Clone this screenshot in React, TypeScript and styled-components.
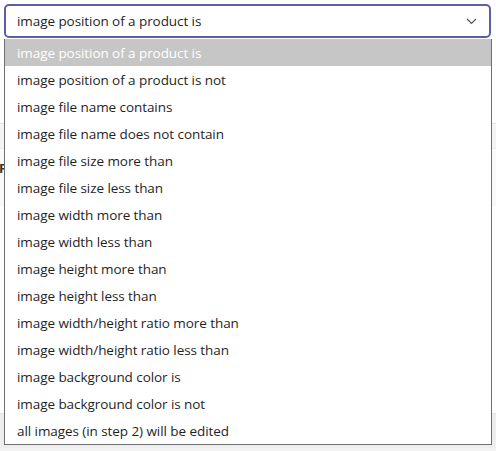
import React from "react";
import styled, { createGlobalStyle } from "styled-components";

const GlobalStyle = createGlobalStyle`
  html, body {
    margin: 0;
    padding: 0;
    background: #ffffff;
  }
  body {
    font-family: "Open Sans", "Noto Sans", sans-serif;
    color: #1f1f1f;
  }
`;

const Page = styled.div`
  position: relative;
  width: 496px;
  height: 451px;
  overflow: hidden;
  background: #ffffff;
  display: flex;
  flex-direction: column;
`;

const SelectBox = styled.div`
  margin: 4px 5px 0 4px;
  height: 34px;
  box-sizing: border-box;
  border: 2px solid #5b5fa7;
  border-radius: 5px;
  display: flex;
  align-items: center;
  justify-content: space-between;
  padding: 0 12px 0 11px;
  font-size: 13.5px;
  letter-spacing: -0.07px;
  color: #1f1f1f;
  background: #ffffff;
`;

const Chevron = styled.svg`
  width: 11px;
  height: 7px;
  flex: none;
`;

/* content of the form that sits underneath the open list */
const FormArea = styled.div`
  flex: 1;
  display: flex;
  flex-direction: column;
`;

const Spacer = styled.div<{ $h: number }>`
  height: ${(p) => p.$h}px;
  flex: none;
`;

const HeaderBand = styled.div`
  height: 24px;
  flex: none;
  background: #f4f4f4;
  border-top: 1px solid #e2e2e2;
  border-bottom: 1px solid #ebebeb;
`;

const SoftRow = styled.div`
  height: 58px;
  flex: none;
  background: #fafafa;
  display: flex;
  align-items: flex-start;
  padding-top: 10px;
  box-sizing: border-box;
`;

const FieldLabel = styled.span`
  font-family: "Open Sans", sans-serif;
  font-weight: 700;
  font-size: 13px;
  color: #333;
  margin-left: -1px;
`;

const FooterBand = styled.div`
  height: 34px;
  flex: none;
  background: #eeeeee;
  border-top: 1px solid #e4e4e4;
`;

const PageBottom = styled.div`
  flex: 1;
  background: #f3f3f3;
`;

const OptionList = styled.ul`
  position: absolute;
  left: 4px;
  top: 39px;
  width: 488px;
  box-sizing: border-box;
  margin: 0;
  padding: 0;
  list-style: none;
  background: #ffffff;
  border: 1px solid #6f6f6f;
  border-top: none;
`;

const OptionItem = styled.li<{ $active?: boolean }>`
  height: 27px;
  display: flex;
  align-items: center;
  padding-left: 12px;
  font-size: 13.5px;
  letter-spacing: -0.07px;
  color: ${(p) => (p.$active ? "#ffffff" : "#1f1f1f")};
  background: ${(p) => (p.$active ? "#c6c6c6" : "transparent")};
  white-space: nowrap;
`;

const options = [
  "image position of a product is",
  "image position of a product is not",
  "image file name contains",
  "image file name does not contain",
  "image file size more than",
  "image file size less than",
  "image width more than",
  "image width less than",
  "image height more than",
  "image height less than",
  "image width/height ratio more than",
  "image width/height ratio less than",
  "image background color is",
  "image background color is not",
  "all images (in step 2) will be edited",
];

export default function App() {
  return (
    <>
      <GlobalStyle />
      <Page>
        <SelectBox>
          <span>image position of a product is</span>
          <Chevron viewBox="0 0 11 7">
            <path d="M1 1 L5.5 5.5 L10 1" fill="none" stroke="#555" strokeWidth="1.2" />
          </Chevron>
        </SelectBox>
        <FormArea>
          <Spacer $h={85} />
          <HeaderBand />
          <SoftRow>
            <FieldLabel>F</FieldLabel>
          </SoftRow>
          <Spacer $h={206} />
          <FooterBand />
          <PageBottom />
        </FormArea>
        <OptionList>
          {options.map((o, i) => (
            <OptionItem key={o} $active={i === 0}>
              {o}
            </OptionItem>
          ))}
        </OptionList>
      </Page>
    </>
  );
}
